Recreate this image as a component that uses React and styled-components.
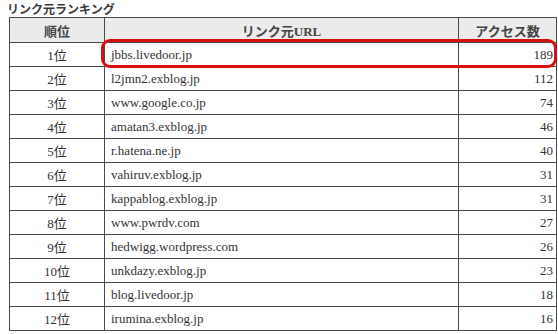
import React from 'react';
import styled, { createGlobalStyle } from 'styled-components';

const Global = createGlobalStyle`
   body {
      margin: 0;
      background: #fff;
      font-family: "Liberation Serif", "Noto Sans CJK JP", serif;
      color: #333;
   }
`

const Wrap = styled.div`
   padding: 1px 2px 0 7px;
`

const Title = styled.div`
   font-family: "Noto Sans CJK JP", sans-serif;
   font-size: 12px;
   font-weight: bold;
   line-height: 16px;
   color: #3a3a3a;
`

const TableBox = styled.div`
   position: relative;
   margin-left: 2px;
   width: 544px;
`

const Table = styled.table`
   border-collapse: collapse;
   width: 100%;
   table-layout: fixed;
   font-size: 13px;
`

const Th = styled.th`
   height: 24px;
   padding: 0;
   background: #ebebeb;
   border: 1px solid #4a4a4a;
   font-family: "Liberation Serif", "Noto Sans CJK JP", serif;
   font-weight: bold;
   font-size: 13px;
   color: #444;
   text-align: center;
   width: ${props => props.w};
`

const Td = styled.td`
   height: 23px;
   padding: 0 ${props => props.align === 'right' ? '3px' : '6px'};
   border: 1px solid #4a4a4a;
   text-align: ${props => props.align};
   color: #333;
   white-space: nowrap;
`

const Highlight = styled.div`
   position: absolute;
   left: 92px;
   top: 22px;
   width: 456px;
   height: 29px;
   box-sizing: border-box;
   border: 3px solid #d80f0f;
   border-radius: 9px;
   pointer-events: none;
`

const rows = [
   ['jbbs.livedoor.jp', 189],
   ['l2jmn2.exblog.jp', 112],
   ['www.google.co.jp', 74],
   ['amatan3.exblog.jp', 46],
   ['r.hatena.ne.jp', 40],
   ['vahiruv.exblog.jp', 31],
   ['kappablog.exblog.jp', 31],
   ['www.pwrdv.com', 27],
   ['hedwigg.wordpress.com', 26],
   ['unkdazy.exblog.jp', 23],
   ['blog.livedoor.jp', 18],
   ['irumina.exblog.jp', 16],
]

const App = () => {
   return (
      <>
         <Global />
         <Wrap>
            <Title>リンク元ランキング</Title>
            <TableBox>
               <Table>
                  <thead>
                     <tr>
                        <Th w="94px">順位</Th>
                        <Th w="353px">リンク元URL</Th>
                        <Th w="97px">アクセス数</Th>
                     </tr>
                  </thead>
                  <tbody>
                     {rows.map(([url, count], i) => (
                        <tr key={url}>
                           <Td align="center">{i + 1}位</Td>
                           <Td align="left">{url}</Td>
                           <Td align="right">{count}</Td>
                        </tr>
                     ))}
                  </tbody>
               </Table>
               <Highlight />
            </TableBox>
         </Wrap>
      </>
   )
}

export default App
